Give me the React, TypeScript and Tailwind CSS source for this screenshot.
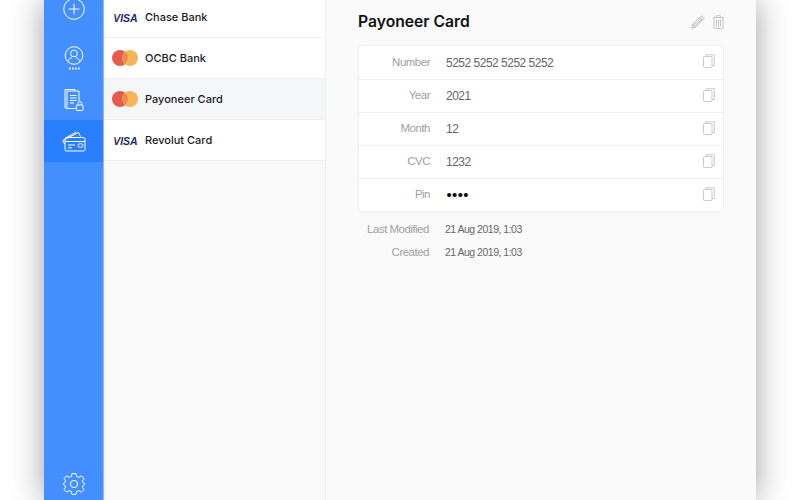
import React from 'react';

const Visa = () => (
  <svg width="26" height="11" viewBox="0 0 26 11" className="shrink-0">
    <text x="1.2" y="10" fontFamily="'Liberation Sans', sans-serif" fontWeight="700" fontStyle="italic" fontSize="10.5" fill="#1c2a6b">VISA</text>
    <path d="M0 2.2 C1.6 2.2 3.2 2.8 4.4 5.2 L3.5 2.8 C3.3 2.2 2.8 2 2.2 2 Z" fill="#f0a83a" />
  </svg>
);

const Master = () => (
  <svg width="26" height="16" viewBox="0 0 26 16" className="-mt-px shrink-0">
    <circle cx="8" cy="8" r="8" fill="#e55b4d" />
    <circle cx="18" cy="8" r="8" fill="#f6b556" />
    <path d="M13 1.8 a8 8 0 0 1 0 12.4 a8 8 0 0 1 0 -12.4 Z" fill="#ee8a52" />
  </svg>
);

const CopyIcon = () => (
  <svg width="12" height="14" viewBox="0 0 12 14" fill="none" stroke="#c9c9c9" strokeWidth="1">
    <rect x="0.5" y="2.5" width="8.5" height="11" rx="1" />
    <path d="M3 2.5 V0.8 H11.3 V11.5 H9" />
  </svg>
);

const fields = [
  { label: 'Number', value: '5252 5252 5252 5252' },
  { label: 'Year', value: '2021' },
  { label: 'Month', value: '12' },
  { label: 'CVC', value: '1232' },
  { label: 'Pin', value: '••••' },
];

const cards = [
  { name: 'Chase Bank', type: 'visa' },
  { name: 'OCBC Bank', type: 'master' },
  { name: 'Payoneer Card', type: 'master', active: true },
  { name: 'Revolut Card', type: 'visa' },
];

export default function App() {
  return (
    <div className="h-[500px] w-[800px] overflow-hidden bg-white font-['Inter',sans-serif]">
      <div className="mx-auto flex h-[500px] w-[712px] bg-[#fafafa] shadow-[0_0_30px_rgba(0,0,0,0.38)]">
        {/* sidebar */}
        <div className="flex w-[60px] shrink-0 flex-col justify-between border-r border-[#8db9ff] bg-[#448fff] text-white">
          <div className="flex flex-col items-center">
            <div className="flex h-[37px] w-full items-start justify-center">
              <svg width="22" height="22" viewBox="0 0 22 22" fill="none" stroke="white" strokeWidth="1" className="-mt-[2px]">
                <circle cx="11" cy="11" r="10.3" />
                <path d="M11 6 V16 M6 11 H16" strokeLinecap="round" />
              </svg>
            </div>
            <div className="flex h-[42px] w-full items-center justify-center">
              <svg width="20" height="24" viewBox="0 0 20 24" fill="none" stroke="white" strokeWidth="1">
                <circle cx="10" cy="9.5" r="8.8" />
                <circle cx="10" cy="7.5" r="3.4" />
                <path d="M3.8 15.5 C5 12.8 7 12 8 11.5 M16.2 15.5 C15 12.8 13 12 12 11.5" />
                <path d="M5 22.5 H6.6 M8 22.5 H9.6 M11 22.5 H12.6 M14 22.5 H15.6" strokeWidth="2" />
              </svg>
            </div>
            <div className="flex h-[41px] w-full items-center justify-center">
              <svg width="20" height="24" viewBox="0 0 20 24" fill="none" stroke="white" strokeWidth="1">
                <path d="M2.5 20 H1 V1.5 H11 V3" />
                <path d="M12 20.5 H3 V3 H15 V13" />
                <path d="M6 7.5 H12.5 M6 10 H12.5 M6 12.5 H12.5 M6 15 H10" />
                <rect x="12.5" y="17" width="6.5" height="5.5" rx="0.6" />
                <path d="M14 17 V15.4 a1.8 1.8 0 0 1 3.6 0 V17" />
              </svg>
            </div>
            <div className="flex h-[42px] w-full items-center justify-center bg-[#2a7fff]">
              <svg width="24" height="21" viewBox="0 0 24 21" fill="none" stroke="white" strokeWidth="1">
                <path d="M0.8 9.5 L16.5 1.5 L18.5 5.5 M3.5 7 L14.5 1 M1 9.5 L2.5 13" />
                <rect x="3" y="6.5" width="20" height="13.5" rx="1.5" />
                <path d="M3 10.5 H23" />
                <path d="M6 14 H13 M6 16.8 H10" />
                <ellipse cx="18.5" cy="14.5" rx="2.6" ry="1.8" />
              </svg>
            </div>
          </div>
          <div className="flex h-[28px] items-start justify-center">
            <svg width="24" height="24" viewBox="0 0 24 24" fill="none" stroke="white" strokeWidth="1">
              <circle cx="12" cy="12" r="3.6" />
              <path d="M10 1.5 H14 L14.6 4.4 L16.9 5.4 L19.4 3.8 L22 6.6 L20.4 9 L21.3 11 L23 12 L21.3 13.4 L20.4 15.2 L22 17.6 L19.4 20.2 L16.9 18.6 L14.6 19.6 L14 22.5 H10 L9.4 19.6 L7.1 18.6 L4.6 20.2 L2 17.6 L3.6 15.2 L2.7 13.4 L1 12 L2.7 11 L3.6 9 L2 6.6 L4.6 3.8 L7.1 5.4 L9.4 4.4 Z" strokeLinejoin="round" />
            </svg>
          </div>
        </div>

        {/* card list */}
        <div className="w-[222px] shrink-0 border-r border-[#f0f0f0] bg-[#f9f9f9]">
          {cards.map((c, i) => (
            <div
              key={c.name}
              className={`flex items-center gap-[7px] border-b border-[#eeeff1] pl-[8px] ${i === 0 ? 'h-[38px] pb-[2px]' : 'h-[41px] pt-px'} ${c.active ? 'bg-[#f5f6f8]' : 'bg-white'}`}
            >
              <div className="flex w-[26px] justify-center">{c.type === 'visa' ? <Visa /> : <Master />}</div>
              <span className="text-[11px] font-medium text-[#1b1b1f]">{c.name}</span>
            </div>
          ))}
        </div>

        {/* detail */}
        <div className="flex-1 px-[32px] pt-[11px]">
          <div className="flex h-[22px] items-center justify-between">
            <h1 className="text-[15.7px] font-semibold text-[#111]">Payoneer Card</h1>
            <div className="flex items-center gap-[8px]">
              <svg width="14" height="14" viewBox="0 0 14 14" fill="none" stroke="#b5b5b5" strokeWidth="1">
                <path d="M0.8 13.2 L1.8 9.5 L10.5 0.8 L13.2 3.5 L4.5 12.2 Z M9 2.5 L11.5 5 M1.8 9.5 L4.5 12.2" />
                <path d="M3 10.2 L10 3.2 M4 11 L11 4" strokeWidth="0.7" />
              </svg>
              <svg width="11" height="14" viewBox="0 0 11 14" fill="none" stroke="#c4c4c4" strokeWidth="1">
                <path d="M0 2.5 H11 M3.5 2.5 V0.7 H7.5 V2.5 M1 2.5 V13.4 H10 V2.5 M3.5 4.5 V11.5 M5.5 4.5 V11.5 M7.5 4.5 V11.5" />
              </svg>
            </div>
          </div>

          <div className="mt-[12px] rounded-[4px] border border-[#f0f0f2] bg-white shadow-[0_0_1px_rgba(0,0,0,0.04)]">
            {fields.map((f, i) => (
              <div key={f.label} className={`flex h-[33px] items-center font-['Liberation_Sans',sans-serif] ${i > 0 ? 'border-t border-[#eeeff1]' : ''}`}>
                <span className="w-[71px] text-right text-[11.5px] tracking-[-0.5px] text-[#a0a0a0]">{f.label}</span>
                <span className="ml-[16px] flex-1 text-[12px] tracking-[-0.5px] text-[#666]">
                  {f.label === 'Pin' ? <span className="font-['Inter',sans-serif] text-[13px] font-bold tracking-[-0.6px] text-[#111]">{f.value}</span> : f.value}
                </span>
                <div className="mr-[8px] -mt-[3px]"><CopyIcon /></div>
              </div>
            ))}
          </div>

          <div className="mt-[6px] flex flex-col font-['Liberation_Sans',sans-serif]">
            {[['Last Modified', '21 Aug 2019, 1:03'], ['Created', '21 Aug 2019, 1:03']].map(([k, v]) => (
              <div key={k} className="flex h-[23px] items-center">
                <span className="w-[71px] whitespace-nowrap text-right text-[11.5px] tracking-[-0.5px] text-[#a0a0a0]">{k}</span>
                <span className="ml-[16px] text-[10.5px] tracking-[-0.5px] text-[#666]">{v}</span>
              </div>
            ))}
          </div>
        </div>
      </div>
    </div>
  );
}
